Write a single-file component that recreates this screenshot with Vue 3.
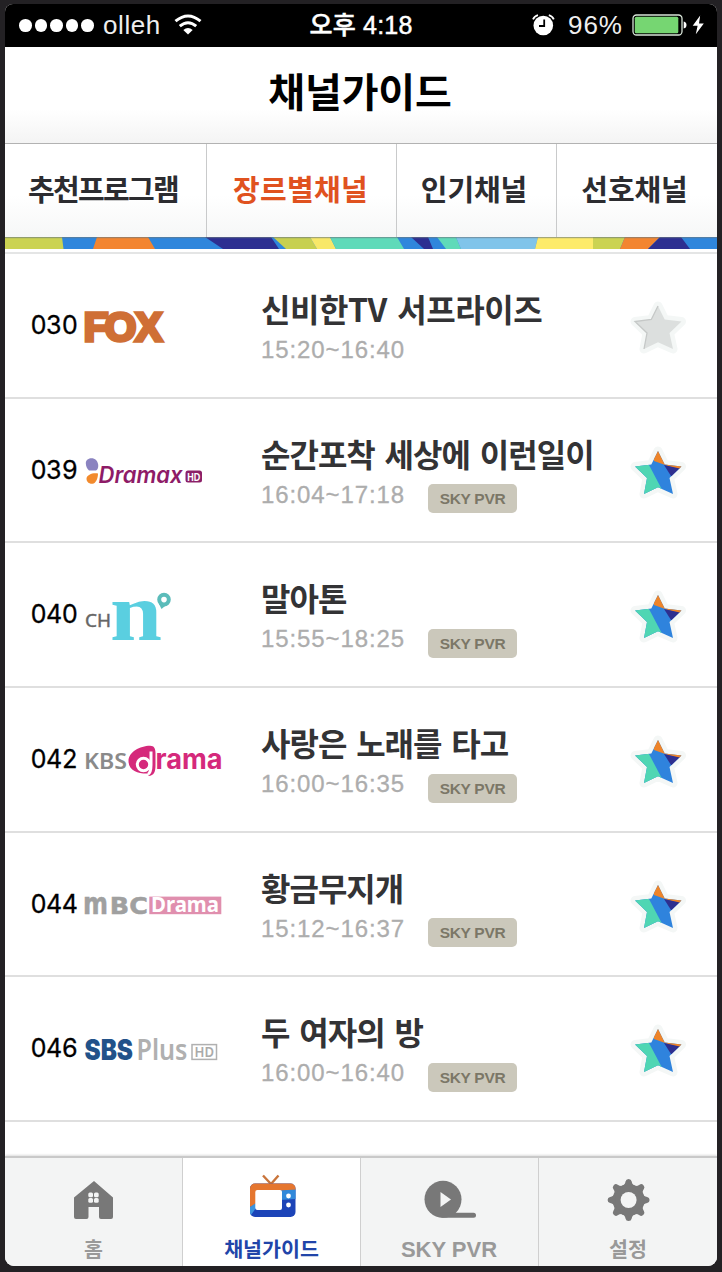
<script setup>
const tabs = [
  { label: '추천프로그램', cls: 'tab-recommend' },
  { label: '장르별채널', cls: 'tab-genre' },
  { label: '인기채널', cls: 'tab-popular' },
  { label: '선호채널', cls: 'tab-favorite' },
]
const channels = [
  { no: '030', logo: 'fox', title: '신비한TV 서프라이즈', time: '15:20~16:40', pvr: false, fav: false },
  { no: '039', logo: 'dramax', title: '순간포착 세상에 이런일이', time: '16:04~17:18', pvr: true, fav: true },
  { no: '040', logo: 'chn', title: '말아톤', time: '15:55~18:25', pvr: true, fav: true },
  { no: '042', logo: 'kbs', title: '사랑은 노래를 타고', time: '16:00~16:35', pvr: true, fav: true },
  { no: '044', logo: 'mbc', title: '황금무지개', time: '15:12~16:37', pvr: true, fav: true },
  { no: '046', logo: 'sbs', title: '두 여자의 방', time: '16:00~16:40', pvr: true, fav: true },
]
const starPath = 'M28 6 L34.7 19.5 L51.5 21.5 L39.5 33 L43 49 L28 42.3 L14 49 L17 33 L5 21.5 L21.3 19.5 Z'
const gearAngles = [0, 45, 90, 135, 180, 225, 270, 315]
</script>

<template>
  <div class="device">
    <div class="screen">
      <div class="status">
        <div class="status-left">
          <i v-for="n in 5" :key="n" class="dot"></i>
          <span class="carrier">olleh</span>
          <svg class="wifi" width="28" height="21" viewBox="0 0 28 21">
            <g fill="none" stroke="#fff" stroke-width="3">
              <path d="M1.5 7.2 Q14 -3.2 26.5 7.2" />
              <path d="M5.8 12.2 Q14 5.2 22.2 12.2" />
            </g>
            <path d="M9.3 16 Q14 12 18.7 16 L14 20.6 Z" fill="#fff" />
          </svg>
        </div>
        <div class="clock">오후 4:18</div>
        <div class="status-right">
          <svg class="alarm" width="23" height="22" viewBox="0 0 23 22">
            <circle cx="11.3" cy="11.5" r="9.8" fill="#fff" />
            <path d="M1 5.4 Q2.5 2.1 6 1.2 M16.8 1.2 Q20.3 2.1 21.8 5.4" fill="none" stroke="#fff" stroke-width="1.8" />
            <path d="M12.2 5.6 V12 H7" fill="none" stroke="#000" stroke-width="1.8" />
          </svg>
          <span class="percent">96%</span>
          <svg class="battery" width="56" height="22" viewBox="0 0 56 22">
            <rect x="1" y="1" width="49" height="20" rx="3.5" fill="none" stroke="#d8e5d8" stroke-width="1.3" />
            <rect x="2.8" y="2.8" width="43.5" height="16.4" rx="1.5" fill="#76d672" />
            <path d="M51.7 7.5 Q54.5 8 54.5 11 Q54.5 14 51.7 14.5 Z" fill="#fff" />
          </svg>
          <svg class="bolt" width="13" height="20" viewBox="0 0 13 20">
            <path d="M8.2 .5 L.7 10.8 H5.6 L3.8 19.2 L11.8 8.4 H7 Z" fill="#fff" />
          </svg>
        </div>
      </div>

      <header class="header"><h1>채널가이드</h1></header>

      <nav class="tabs">
        <a v-for="t in tabs" :key="t.label" class="tab" :class="t.cls"><span>{{ t.label }}</span></a>
      </nav>
      <svg class="ribbon" width="712" height="12" viewBox="5 237 712 12" preserveAspectRatio="none">
        <rect x="5" y="237" width="712" height="12" fill="#2f86dc" />
        <path d="M5 237H62L63.5 249H5Z" fill="#cbd352" />
        <path d="M97 237H148L155 249H93Z" fill="#f38530" />
        <path d="M205 237H271L279 249H223Z" fill="#2d2f91" />
        <path d="M273 237H310L317 249H286Z" fill="#c7d050" />
        <path d="M310 237H330L336 249H317Z" fill="#f8e868" />
        <path d="M330 237H397L404 249H336Z" fill="#5fdab9" />
        <path d="M411 237H428L433 249H424Z" fill="#2d2f91" />
        <path d="M437 237H456L461 249H446Z" fill="#5fdab9" />
        <path d="M456 237H538L535 249H461Z" fill="#80c4ea" />
        <path d="M538 237H593V249H535Z" fill="#fdeb6a" />
        <path d="M593 237H625L620 249H593Z" fill="#cbd352" />
        <path d="M625 237H660L648 249H620Z" fill="#f38530" />
        <path d="M660 237H681L690 249H648Z" fill="#2d2f91" />
        <rect x="5" y="237" width="712" height="1.2" fill="#6b7a80" opacity=".6" />
      </svg>

      <main class="list">
        <article v-for="c in channels" :key="c.no" class="row">
          <div class="number">{{ c.no }}</div>
          <svg class="logo" width="150" height="60" viewBox="0 0 150 60">
            <g v-if="c.logo === 'fox'">
              <text class="t-fox" x="-1.2 19.8 50.2" y="43.9">FOX</text>
            </g>
            <g v-else-if="c.logo === 'dramax'">
              <path d="M.8 21 C1 16 8 15 11 18 C14 21 14 27 11 28.5 L4 28.5 C2 27 .8 24 .8 21Z" fill="#8a83c0" />
              <path d="M1.5 36.5 C2 32.5 8 30.5 13 31.5 C13 36 11 41.5 7.5 41.7 C4 42 1.5 40 1.5 36.5Z" fill="#f28a2c" />
              <text class="t-dramax" x="13.5" y="41" textLength="84" lengthAdjust="spacingAndGlyphs">Dramax</text>
              <rect x="100.5" y="28.6" width="16.5" height="12" rx="2.5" fill="#8b2068" />
              <text class="t-hdx" x="102.3" y="38.6" textLength="13" lengthAdjust="spacingAndGlyphs">HD</text>
            </g>
            <g v-else-if="c.logo === 'chn'">
              <text class="t-ch" x="0" y="41" textLength="26" lengthAdjust="spacingAndGlyphs">CH</text>
              <text class="t-n" x="25" y="54" textLength="52" lengthAdjust="spacingAndGlyphs">n</text>
              <path d="M74 18 L76.5 23 L82.5 18Z" fill="#5bbcba" />
              <circle cx="79" cy="13.6" r="4.8" fill="#fff" stroke="#5bbcba" stroke-width="4" />
            </g>
            <g v-else-if="c.logo === 'kbs'">
              <text class="t-kbs" x="-1" y="37.5" textLength="43" lengthAdjust="spacingAndGlyphs">KBS</text>
              <path d="M43.5 30 C43.5 21 55 15 65 14.8 C69 14.7 70.5 17.5 70.5 22 V34 C70.5 41 69 44.5 63.5 45 V42.5 C54 43 43.5 40 43.5 30Z" fill="#d5297b" />
              <path d="M66 20.5 V34 C66 39.5 65.5 41.8 63 43.2" fill="none" stroke="#fff" stroke-width="3" />
              <circle cx="58.5" cy="33.5" r="6.2" fill="none" stroke="#fff" stroke-width="3" />
              <text class="t-rama" x="70.5" y="37.5" textLength="67" lengthAdjust="spacingAndGlyphs">rama</text>
            </g>
            <g v-else-if="c.logo === 'mbc'">
              <text class="t-mbc" x="-2" y="38" font-size="30" textLength="25" lengthAdjust="spacingAndGlyphs">m</text>
              <text class="t-mbc" x="24.8" y="38" font-size="23.5" textLength="38" lengthAdjust="spacingAndGlyphs">BC</text>
              <rect x="64.3" y="20.6" width="72" height="17.6" fill="#e08fae" />
              <text class="t-mdrama" x="66" y="36" textLength="68" lengthAdjust="spacingAndGlyphs">Drama</text>
            </g>
            <g v-else>
              <text class="t-sbs" x="-.5" y="40" textLength="48.5" lengthAdjust="spacingAndGlyphs">SBS</text>
              <text class="t-plus" x="51.5" y="40" textLength="51" lengthAdjust="spacingAndGlyphs">Plus</text>
              <rect x="107" y="24.6" width="24.5" height="14.8" fill="none" stroke="#b0b0b0" stroke-width="1.5" />
              <text class="t-hd" x="109.5" y="37" textLength="19.5" lengthAdjust="spacingAndGlyphs">HD</text>
            </g>
          </svg>
          <div class="info">
            <h2 :class="{ wide: c.logo === 'fox' }">{{ c.title }}</h2>
            <div class="meta">
              <span class="time">{{ c.time }}</span>
              <span v-if="c.pvr" class="badge">SKY PVR</span>
            </div>
          </div>
          <svg class="star" width="56" height="56" viewBox="0 0 56 56">
            <path :d="starPath" fill="#f4f7f6" stroke="#f4f7f6" stroke-width="9" stroke-linejoin="round" />
            <template v-if="c.fav">
              <clipPath :id="'star-' + c.no"><path :d="starPath" /></clipPath>
              <g :clip-path="`url(#star-${c.no})`">
                <rect width="56" height="56" fill="#2f83dd" />
                <path d="M0 20H19L38 56H0Z" fill="#4fd6b3" />
                <path d="M22 0H56V26L38 21L24 16Z" fill="#ee8429" />
                <path d="M34 20L52 24L46 33L41 31Z" fill="#2e2f8f" />
              </g>
            </template>
            <template v-else>
              <path :d="starPath" fill="#dcdfde" />
              <path d="M14 49 L17 33 L5 21.5 L21.3 19.5 L28 6" fill="none" stroke="#c5c8c7" stroke-width="1.3" />
            </template>
          </svg>
        </article>
      </main>

      <footer class="bottom">
        <div class="item">
          <svg width="52" height="52" viewBox="68 1172 52 52">
            <path fill="#787878" d="M94 1181 L113 1197.5 V1217 Q113 1219 111 1219 H101 Q99 1219 99 1217 V1207 H88.5 V1217 Q88.5 1219 86.5 1219 H76 Q74 1219 74 1217 V1197.5 Z" />
            <g fill="#f3f4f4">
              <rect x="88.3" y="1192.5" width="4.7" height="4.7" rx="1.5" /><rect x="94" y="1192.5" width="4.7" height="4.7" rx="1.5" />
              <rect x="88.3" y="1198.1" width="4.7" height="4.7" rx="1.5" /><rect x="94" y="1198.1" width="4.7" height="4.7" rx="1.5" />
            </g>
          </svg>
          <span class="k">홈</span>
        </div>
        <div class="item active">
          <svg width="52" height="52" viewBox="246 1172 52 52">
            <clipPath id="tv"><rect x="250" y="1183.5" width="45.5" height="33.5" rx="5" /></clipPath>
            <path d="M263 1175.5 L271 1184 L278.5 1175.5" fill="none" stroke="#c9743a" stroke-width="2.4" />
            <g clip-path="url(#tv)">
              <rect x="250" y="1183" width="46" height="35" fill="#1c44b8" />
              <path d="M250 1183 H296 V1190 L280 1191 L258 1203 L250 1207 Z" fill="#e5762f" />
              <path d="M280 1190.5 L296 1189.5 V1199 L280 1200Z" fill="#3189da" />
              <path d="M250 1207 L256 1203 V1208 L251 1215 H250Z" fill="#3c94de" />
            </g>
            <rect x="255.3" y="1190" width="26.7" height="20" rx="2" fill="#fff" />
            <circle cx="288.5" cy="1196" r="2.4" fill="#fff" /><circle cx="288.5" cy="1205" r="2.4" fill="#fff" />
          </svg>
          <span class="k">채널가이드</span>
        </div>
        <div class="item">
          <svg width="52" height="52" viewBox="423.5 1172 52 52">
            <circle cx="442.5" cy="1199.3" r="18.5" fill="#787878" />
            <path d="M442 1215.3 H473" stroke="#787878" stroke-width="5" stroke-linecap="round" />
            <path d="M440 1192 L450.5 1199.4 L440 1207 Z" fill="#f3f4f4" />
          </svg>
          <span class="sky">SKY PVR</span>
        </div>
        <div class="item">
          <svg width="52" height="52" viewBox="-26.6 -28 52 52">
            <circle r="16" fill="#787878" />
            <path v-for="a in gearAngles" :key="a" :transform="`rotate(${a})`" d="M-7 -13.5 Q-3.6 -15 -3.1 -18.5 Q-2.6 -21 0 -21 Q2.6 -21 3.1 -18.5 Q3.6 -15 7 -13.5Z" fill="#787878" />
            <circle r="8" fill="#f3f4f4" />
          </svg>
          <span class="k">설정</span>
        </div>
      </footer>
    </div>
  </div>
</template>

<style>
html, body { margin: 0; background: #232124; }
</style>

<style scoped>
* { box-sizing: border-box; }
.device {
  width: 722px; height: 1272px; padding: 4px 5px 6px; overflow: hidden;
  background: #232124;
  font-family: "Liberation Sans", "Noto Sans CJK KR", sans-serif;
}
.screen {
  width: 712px; height: 1262px; display: flex; flex-direction: column;
  background: #fff; border-radius: 8px 8px 9px 9px; overflow: hidden;
}
h1, h2 { margin: 0; }
svg { display: block; flex: none; }
.status {
  height: 42.5px; flex: none; background: #000; color: #fff;
  display: grid; grid-template-columns: 1fr auto 1fr; align-items: center;
}
.status-left { display: flex; align-items: center; padding-left: 14px; }
.dot { width: 12.6px; height: 12.6px; margin-right: 3px; border-radius: 50%; background: #fff; }
.carrier { margin-left: 6px; font-size: 26px; line-height: 30px; letter-spacing: .6px; color: #eee; }
.wifi { margin-left: 13px; margin-top: -2px; }
.clock { font: 500 25px/30px "Liberation Sans", "Noto Sans CJK KR", sans-serif; letter-spacing: .2px; -webkit-text-stroke: .5px #fff; }
.status-right { display: flex; align-items: center; justify-content: flex-end; padding-right: 12px; }
.alarm { margin-top: -1px; }
.percent { margin-left: 13px; font-size: 26px; line-height: 30px; letter-spacing: 1px; color: #eee; }
.battery { margin-left: 9px; }
.bolt { margin-left: 4px; }
.header {
  height: 97px; flex: none; padding-bottom: 9px; padding-right: 2px; display: flex; align-items: center; justify-content: center;
  background: linear-gradient(#fff 65%, #f4f4f4); border-bottom: 1px solid #b2b2b2;
}
h1 { font: 700 40px/56px "Noto Sans CJK KR", sans-serif; color: #000; letter-spacing: -.1px; }
.tabs { height: 93.5px; flex: none; display: flex; background: linear-gradient(#fff 55%, #f6f7f7); }
.tab {
  display: flex; align-items: center; justify-content: center; padding-bottom: 4px;
  border-right: 1px solid #c9cacb; color: #2c2c30;
  font: 700 29px/40px "Noto Sans CJK KR", sans-serif; letter-spacing: -.1px; white-space: nowrap;
}
.tab-recommend { width: 202px; letter-spacing: -1.7px; padding-right: 5px; }
.tab-genre { width: 190px; color: #e0521f; letter-spacing: .3px; padding-right: 2px; }
.tab-popular { width: 160px; padding-right: 5px; }
.tab-favorite { width: 160px; border-right: 0; padding-right: 5px; }
.ribbon { margin-bottom: 3px; }
.list { flex: none; height: 904px; border-top: 2px solid #e4e5e5; }
.row { height: 144.68px; display: flex; align-items: flex-start; border-bottom: 2px solid #dfdfdf; }
.number { width: 54px; margin: 56px 0 0 25.5px; font: 400 25px/30px Inter, sans-serif; font-variant-numeric: tabular-nums; letter-spacing: -.6px; color: #000; -webkit-text-stroke: .3px #000; }
.logo { margin-top: 43px; margin-left: .5px; overflow: visible; }
.info { width: 369px; margin: 32px 0 0 26px; }
h2 { font: 700 32px/44px "Noto Sans CJK KR", sans-serif; letter-spacing: -1px; word-spacing: 3.6px; color: #333335; white-space: nowrap; }
.wide { letter-spacing: -.45px; }
.meta { display: flex; align-items: flex-start; height: 36px; padding-top: 5px; }
.time { width: 167px; font-size: 24px; line-height: 30px; letter-spacing: .9px; color: #adadad; -webkit-text-stroke: .3px #adadad; }
.badge {
  width: 89px; height: 29px; margin-top: 4.5px; border-radius: 5px; background: #cbc8bb; color: #7b7767;
  font-weight: 700; font-size: 15.5px; line-height: 29px; letter-spacing: -.3px; text-align: center;
}
.star { margin-top: 46px; }
.bottom {
  flex: 1; display: grid; grid-template-columns: 178px 178px 178px 178px;
  border-top: 2px solid #c9c9c9; background: #f3f4f4; box-shadow: 0 -1px 2px #ddd;
}
.item { display: flex; flex-direction: column; align-items: center; padding-top: 14px; border-right: 1px solid #cfcfcf; color: #999; }
.item:last-child { border-right: 0; }
.active { background: #fff; color: #2145a9; }
.k { margin-top: 9px; font: 700 20.6px/30px "Noto Sans CJK KR", sans-serif; }
.sky { margin-top: 11px; margin-right: 1px; font-weight: 700; font-size: 22px; line-height: 30px; }
.t-fox { font: 700 40.5px "Liberation Sans", sans-serif; fill: #cf6f35; stroke: #cf6f35; stroke-width: 3.6px; }
.t-dramax { font: italic 600 22.5px Inter, sans-serif; fill: #8e1b67; }
.t-hdx { font: 700 11px "Liberation Sans", sans-serif; fill: #fff; }
.t-ch { font: 400 17.5px "Noto Sans", sans-serif; fill: #666; stroke: #666; stroke-width: .4px; }
.t-n { font: 700 83px "Liberation Serif", serif; fill: #5acfe0; }
.t-kbs { font: 600 21.5px "Noto Sans", sans-serif; fill: #8a8a8a; }
.t-rama { font: 700 28px Inter, sans-serif; fill: #d5297b; }
.t-mbc { font-family: "DejaVu Sans", sans-serif; font-weight: 700; fill: #a0a0a0; stroke: #a0a0a0; stroke-width: .5px; }
.t-mdrama { font: 700 21px "Noto Sans", sans-serif; fill: #fff; }
.t-sbs { font: 900 28px Inter, sans-serif; fill: #225289; }
.t-plus { font: 600 28px "Noto Sans", sans-serif; fill: #b0b0b0; }
.t-hd { font: 600 13.5px "Noto Sans", sans-serif; fill: #aaa; }
</style>
